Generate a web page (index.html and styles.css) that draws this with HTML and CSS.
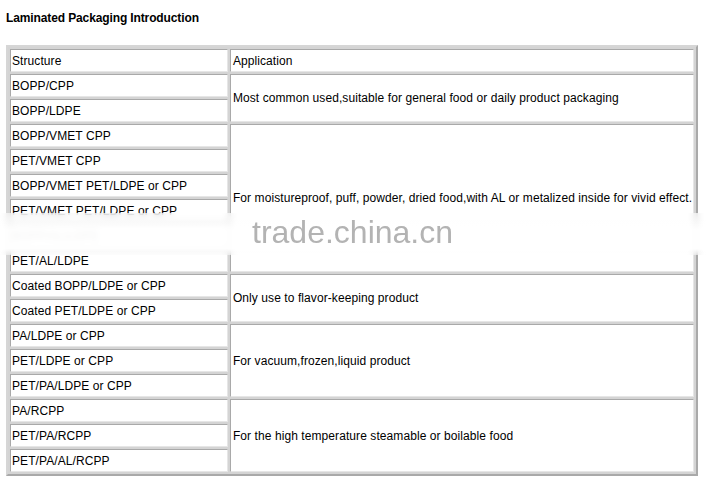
FILE: index.html
```html
<!DOCTYPE html>
<html>
<head>
<meta charset="utf-8">
<link rel="stylesheet" href="styles.css">
</head>
<body>
<div class="page">
  <h1 class="title">Laminated Packaging Introduction</h1>
  <table class="grid">
    <tr><td class="c1">Structure</td><td class="c2">Application</td></tr>
    <tr><td class="c1">BOPP/CPP</td><td class="c2" rowspan="2">Most common used,suitable for general food or daily product packaging</td></tr>
    <tr><td class="c1">BOPP/LDPE</td></tr>
    <tr><td class="c1">BOPP/VMET CPP</td><td class="c2" rowspan="6">For moistureproof, puff, powder, dried food,with AL or metalized inside for vivid effect.</td></tr>
    <tr><td class="c1">PET/VMET CPP</td></tr>
    <tr><td class="c1">BOPP/VMET PET/LDPE or CPP</td></tr>
    <tr><td class="c1">PET/VMET PET/LDPE or CPP</td></tr>
    <tr><td class="c1">BOPP/AL/LDPE</td></tr>
    <tr><td class="c1">PET/AL/LDPE</td></tr>
    <tr><td class="c1">Coated BOPP/LDPE or CPP</td><td class="c2" rowspan="2">Only use to flavor-keeping product</td></tr>
    <tr><td class="c1">Coated PET/LDPE or CPP</td></tr>
    <tr><td class="c1">PA/LDPE or CPP</td><td class="c2" rowspan="3">For vacuum,frozen,liquid product</td></tr>
    <tr><td class="c1">PET/LDPE or CPP</td></tr>
    <tr><td class="c1">PET/PA/LDPE or CPP</td></tr>
    <tr><td class="c1">PA/RCPP</td><td class="c2" rowspan="3">For the high temperature steamable or boilable food</td></tr>
    <tr><td class="c1">PET/PA/RCPP</td></tr>
    <tr><td class="c1">PET/PA/AL/RCPP</td></tr>
  </table>
  <div class="band"></div>
  <div class="mark">trade.china.cn</div>
</div>
</body>
</html>
```

FILE: styles.css
```css
html, body {
  margin: 0;
  padding: 0;
  background: #ffffff;
}
.page {
  position: relative;
  width: 706px;
  height: 486px;
  overflow: hidden;
  padding: 0 0 0 6px;
  box-sizing: border-box;
  font-family: "Liberation Sans", Arial, sans-serif;
  font-size: 12px;
  color: #000000;
}
.title {
  margin: 0;
  padding-top: 11px;
  height: 45px;
  box-sizing: border-box;
  font-size: 12px;
  line-height: 14px;
  font-weight: bold;
  letter-spacing: -0.12px;
}
.grid {
  border-collapse: separate;
  border-spacing: 2px;
  border: 2px solid;
  border-color: #d6d6d6 #a9a9a9 #a9a9a9 #d6d6d6;
  background: #d4d4d4;
  table-layout: fixed;
  width: 692px;
  letter-spacing: 0.08px;
}
.grid td {
  background: #ffffff;
  border: 1px solid;
  border-color: #a9a9a9 #e6e6e6 #e6e6e6 #a9a9a9;
  padding: 0 0 0 2px;
  height: 21px;
  line-height: 14px;
  vertical-align: middle;
  white-space: nowrap;
  overflow: hidden;
}
.grid td.c1 {
  width: 214px;
  padding-left: 1px;
}
.grid td.c2 {
  width: 458px;
}
.band {
  position: absolute;
  left: 0;
  right: 0;
  top: 213px;
  height: 42px;
  background: linear-gradient(to bottom, rgba(255,255,255,0.55) 0%, rgba(255,255,255,0.95) 40%, rgba(255,255,255,0.95) 85%, rgba(255,255,255,0.4) 100%);
  backdrop-filter: blur(3px);
}
.mark {
  position: absolute;
  left: 252px;
  top: 212px;
  font-family: "Liberation Sans", Arial, sans-serif;
  font-size: 32px;
  line-height: 40px;
  color: #b3b3b3;
}
```
